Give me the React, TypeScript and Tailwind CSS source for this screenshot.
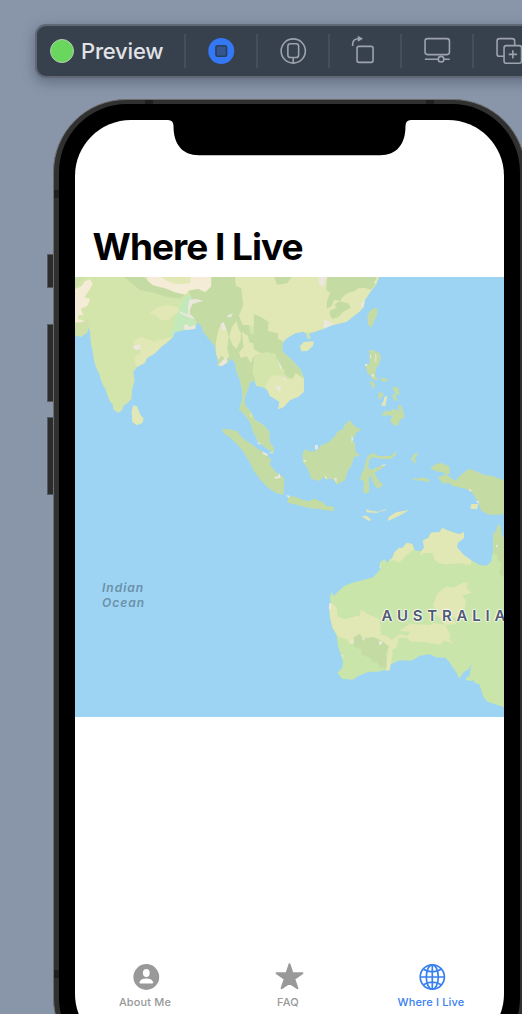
import type { ReactNode } from "react";

const SAND = "#e1e7b5";
const LEAF = "#c4dca4";
const PLAIN = "#d3e5ab";
const DUNE = "#f4ecd6";
const MIST = "#ebe7dd";

function Asia() {
  return (
    <g transform="translate(60 220) scale(.33333)">
      <path
        fill={PLAIN}
        d="M40 160V345L62 350 80 340 86 322 90 335 93 375 98 392 100 410 107 440 118 462 122 478 130 498 137 508 142 525 150 545 158 552 160 568 175 579 187 570 190 558 207 545 215 535 216 510 224 480 220 455 232 440 255 428 260 415 285 400 297 385 320 370 340 350 345 335 375 330 407 325 410 305 425 318 430 335 450 360 465 378 468 400 475 420 472 436 485 438 500 430 515 415 525 430 530 455 540 480 546 510 548 535 538 568 550 580 570 605 580 635 595 665 620 685 642 698 642 685 628 665 628 635 610 615 585 600 575 580 555 555 555 530 565 505 570 485 585 483 588 497 605 500 622 510 630 528 648 535 658 545 655 568 672 560 690 540 715 530 732 515 732 475 722 450 705 430 690 415 668 395 665 375 680 355 705 340 730 335 739 342 743 357 752 355 746 342 760 337 790 328 800 320 820 315 860 305 875 293 885 285 898 275 910 262 915 240 925 225 935 210 948 195 955 160Z"
      />
      <path fill={DUNE} d="M45 208 65 198 74 184 90 178 98 192 90 207 73 232 91 237 82 258 62 266 70 286 56 285 53 296 71 302 69 309 45 307Z" />
      <path fill="#cfe1a8" d="M45 170H78L60 184 45 205ZM45 310 72 305 87 300 82 338 62 350 45 345Z" />
      <path fill={LEAF} d="M190 170 250 170 278 195 310 205 350 216 378 222 360 236 320 231 280 218 240 210 215 190Z" />
      <path fill={DUNE} d="M258 165H455L453 200 436 217 414 207 386 212 376 224 342 216 317 205 280 196 264 184Z" />
      <path fill={SAND} d="M300 170H392L390 190 350 193 324 184Z" />
      <path fill={SAND} d="M268 280 292 262 322 256 357 262 356 276 340 286 326 301 300 300 290 287ZM218 365 244 350 282 365 341 349 310 375 285 400 260 415 255 428 232 440 224 430 226 408 244 397Z" />
      <path fill="#c3e9bb" d="M355 275 365 243 382 227 402 228 404 238 388 246 383 266 389 285 405 297 406 326 375 330 345 336 337 352 328 345 345 311 342 299Z" />
      <path
        fill={LEAF}
        d="M386 212 414 207 436 217 453 200 455 165H500L525 170 528 198 544 205 550 255 537 287 548 315 567 315 570 340 582 345 582 282 602 290 626 306 624 333 654 340 654 356 668 360 668 395 690 415 705 430 722 450 728 473 707 460 698 477 680 469 666 450 653 428 645 401 620 397 582 404 596 410 580 435 583 460 586 483 570 485 565 505 555 530 555 555 575 580 585 600 610 615 628 635 628 665 642 685 642 698 620 685 595 665 580 635 570 605 550 580 538 568 548 535 546 510 540 480 530 455 525 430 515 415 500 430 485 438 472 436 475 420 468 400 465 378 450 360 430 335 425 318 408 303 398 290 388 278 389 260 398 242Z"
      />
      <path fill={SAND} d="M500 165H960L948 195 935 210 925 225 915 240 910 262 898 275 885 285 860 305 820 315 800 320 760 337 730 335 705 340 680 355 668 363 654 356 654 340 624 333 626 306 602 290 582 282 580 320 567 315 548 315 537 287 550 255 544 205 528 198 525 170Z" />
      <path fill={SAND} d="M476 323 491 313 500 329 506 350 502 386 508 410 498 418 484 407 474 420 468 400 468 365ZM516 320 530 304 537 329 543 339 542 362 529 386 517 374 508 350ZM545 335 564 347 568 367 580 370 582 388 605 401 598 410 580 410 573 430 560 409 542 414 537 397 551 382Z" />
      <path fill={PLAIN} d="M582 406 620 397 645 401 655 430 674 452 670 470 651 464 633 468 625 480 620 495 605 500 588 497 586 483 577 455 582 430Z" />
      <path fill={SAND} d="M633 468 657 465 678 476 698 477 707 460 731 478 732 515 715 530 690 540 672 560 655 568 658 545 630 528 616 497 625 480Z" />
      <path fill={LEAF} d="M640 165H700L681 190 651 194ZM802 165H950L948 178 940 187 948 195 931 209 915 203 895 205 882 214 862 219 846 233 840 244 864 250 873 263 849 276 835 292 816 296 808 280 812 271 830 263 824 254 840 242 822 239 813 260 800 266 801 242 811 218 799 210Z" />
      <path fill={MIST} d="M778 165H801L795 187 788 202 777 190ZM792 296 804 303 820 312 803 322 790 326ZM905 246 914 243 912 258 903 266ZM388 239 409 237 430 242 410 248 397 252 390 268 390 283 406 297 390 293 360 280 358 274 385 284 384 260ZM371 317 380 311 389 321 404 315 406 327 374 330ZM481 313 491 306 499 327 487 332ZM503 286 519 280 513 292 503 292ZM498 410 502 427 485 439 475 435ZM218 377 240 373 242 388 225 390ZM640 493 650 500 664 497 657 517ZM650 415 665 440 664 452ZM668 467 680 477 672 482Z" />
      <path fill={SAND} d="M219 556 231 559 240 582 251 596 247 609 232 616 217 607 215 575ZM720 378 732 366 761 364 759 378 742 393 724 394Z" />
      <path fill={LEAF} d="M922 289 930 272 944 264 953 266 951 286 941 307 934 323 924 314Z" />
      <path fill={LEAF} d="M928 391 943 390 949 398 957 395 963 414 957 435 948 444 946 465 951 476 962 479 970 472 984 481 985 484 969 485 961 479 946 480 935 475 930 464 924 462 915 435 929 431ZM928 484 941 485 946 500 938 504ZM955 516 972 521 965 532 955 540ZM996 502 1015 502 1018 523 1007 526 1013 544 1003 541 996 525 1007 522Z" />
      <path fill={SAND} d="M973 530 982 528 976 559 963 556 971 543Z" />
      <path fill={MIST} d="M930 405h3v9h-3zM946 402h3v25h-3zM936 460 943 466 940 471 935 468ZM915 432h7v6h-6z" />
    </g>
  );
}

function Islands() {
  return (
    <g transform="translate(200 400) scale(.33333)">
      <path fill={LEAF} d="M65 88 80 87 112 93 122 108 139 122 163 139 179 150 199 165 213 178 209 193 228 217 253 235 251 285 229 279 204 263 182 240 160 210 151 190 127 151 111 133 91 113 73 101Z" />
      <path fill={LEAF} d="M307 165 314 148 332 155 353 151 364 135 384 128 404 109 414 94 427 89 434 75 449 60 458 73 473 84 486 91 470 96 464 109 452 116 465 129 466 154 480 167 462 171 455 195 442 215 436 240 410 254 403 242 392 234 380 240 370 231 358 243 334 236 326 213 318 197 309 187Z" />
      <path fill={LEAF} d="M264 291 282 289 307 299 330 304 342 295 356 302 372 308 377 317 402 320 401 334 350 326 326 324 293 315 263 308Z" />
      <path fill={LEAF} d="M498 180 507 164 520 159 536 169 573 167 591 153 587 166 571 177 542 176 520 172 508 178 505 203 514 210 548 195 558 193 543 207 523 218 537 243 550 255 532 267 519 247 512 225 507 234 507 278 490 280 492 244 480 240 485 219 493 206ZM640 164 653 156 652 164 644 175 650 191 640 186 633 176ZM638 235 655 236 668 232 685 238 691 247 670 242 642 241ZM691 205 704 194 722 188 748 199 749 221 738 223 755 235 767 242 779 228 804 208 817 209 850 224 880 229 915 242V340L897 344 866 344 844 332 832 302 817 278 800 267 758 258 746 248 728 251 713 231 736 224 730 217 708 214ZM545 42 558 32 570 34 579 26 596 33 594 14 605 19 614 51 600 60 593 77 580 75 570 62 578 48 562 45 551 50Z" />
      <path fill={SAND} d="M498 327 511 332 536 335 557 327 558 330 529 339 500 337ZM484 349 500 347 514 359 507 363ZM565 352 588 337 628 330 602 345 565 363ZM814 312 835 312 831 328 811 326Z" />
      <path fill={MIST} d="M171 125 181 130 177 135ZM186 154 204 163 202 168 190 163ZM209 157h10v3h-10zM149 36 156 49 153 53ZM255 286 270 287 269 293ZM346 135 354 135 353 149 344 147ZM454 109 461 115 455 128ZM309 180h10l-3 8zM373 226 382 233 377 236ZM402 234h8l-1 14zM543 196 558 192 552 197ZM805 267 816 270 811 275ZM827 303h10v8zM222 230h9l8-10 3 14-16 2z" />
    </g>
  );
}

function Australia() {
  return (
    <g transform="translate(310 510) scale(.33333)">
      <path
        fill="#c9e5aa"
        d="M62 275 60 260 65 246 71 258 90 239 102 228 128 218 157 211 190 202 211 178 209 158 223 148 233 159 240 146 255 144 252 128 266 115 278 113 290 98 307 102 315 121 331 124 342 113 339 91 355 83 363 68 389 66 397 53 411 61 448 73 462 66 462 84 443 99 441 112 461 135 484 151 507 164 529 167 543 156 550 121 550 72 558 63 565 42 572 51 575 77 590 90V595L575 589 532 575 520 560 508 522 494 519 492 510 481 513 467 510 470 500 478 500 484 462 476 478 463 485 447 506 440 489 418 456 406 443 378 442 360 433 330 437 304 452 268 451 238 465 228 479 202 485 178 485 144 498 129 509 96 506 82 488 97 473 99 455 84 408 80 376 67 353 60 321Z"
      />
      <path fill={SAND} d="M233 159 247 144 252 128 266 115 278 113 290 98 307 102 312 119 292 133 280 148 267 157 248 149ZM327 136 342 113 339 91 355 83 363 68 389 66 397 53 411 61 448 73 462 66 462 84 443 99 441 112 461 135 484 151 482 166 452 160 405 163 385 159 373 149 369 130 349 128ZM56 290 65 279 80 292 82 319 103 328 150 316 153 298 177 314 209 328 213 375 231 377 245 390 268 372 293 377 301 365 267 363 299 341 356 345 374 339 406 345 421 375 417 386 432 400 403 392 389 404 347 397 300 394 292 384 265 383 261 410 246 420 248 433 239 481 227 483 229 460 236 410 216 402 195 386 150 382 148 398 119 402 112 389 85 380 68 354 60 321ZM369 288 378 262 383 249 410 229 430 233 460 217 475 220 469 233 485 248 458 257 468 274 463 311 440 323 425 320 440 342 404 345 394 323 375 315 380 298Z" />
      <path fill={LEAF} d="M131 382 149 371 158 385 190 381 211 390 237 409 228 428 230 474 208 472 200 456 190 460 180 443 156 435 154 420 132 409ZM550 72 558 63 565 42 572 51 575 77 590 90V210L568 190 575 160 560 145 564 136 550 130Z" />
      <path fill={MIST} d="M57 280h8v18h-8zM121 392h11l-5 11zM155 385h10l-4 8zM206 394h10v8l-8 3zM94 435h6v10zM209 167h5l-4 11zM132 321 141 320 137 325ZM557 105h8l-6 9z" />
    </g>
  );
}

function WorldMap() {
  return (
    <div className="relative h-[440px] w-full shrink-0 overflow-hidden bg-[#9dd4f3]">
      <svg viewBox="75 277 429 440" className="block h-[440px] w-[429px]">
        <Asia />
        <Islands />
        <Australia />
      </svg>
      <p className="absolute left-[27px] top-[303px] text-[12px] font-semibold italic leading-[15px] tracking-[1px] text-[#6b90a9]">
        Indian
        <br />
        Ocean
      </p>
      <p className="absolute left-[306.5px] top-[329px] whitespace-nowrap text-[15px] font-semibold leading-[20px] tracking-[4.8px] text-[#505a70] [text-shadow:0_0_2px_#fff,1px_0_1px_#ffffffb0,-1px_0_1px_#ffffffb0,0_1px_1px_#ffffffb0,0_-1px_1px_#ffffffb0]">
        AUSTRALIA
      </p>
    </div>
  );
}

function ToolButton({ children }: { children: ReactNode }) {
  return (
    <div className="flex h-[50px] w-[72px] shrink-0 items-center">
      <div className="h-[34px] w-[1.5px] bg-[#454e5b]" />
      <svg viewBox="0 0 70 50" className="h-[50px] w-[70.5px]" fill="none" stroke="#9ca3ad" strokeWidth="1.6">
        {children}
      </svg>
    </div>
  );
}

function Toolbar() {
  return (
    <div className="ml-[35px] flex h-[54px] w-[580px] shrink-0 items-center rounded-[11px] border-2 border-[#5f6874] bg-[#37414e] shadow-[0_4px_14px_rgba(35,45,65,0.4)]">
      <div className="ml-[13px] size-[24px] shrink-0 rounded-full border-[1.5px] border-[#b5cdb6] bg-[#69d65d]" />
      <span className="ml-[7px] w-[103px] shrink-0 text-[22px] font-medium leading-[28px] tracking-[-0.2px] text-[#e1e3e6]">Preview</span>
      <ToolButton>
        <circle cx="35" cy="25" r="13" fill="#3478f6" stroke="none" />
        <rect x="29.7" y="19.7" width="10.6" height="10.6" rx="1.5" fill="#36558f" stroke="#28405f" strokeWidth="1.6" />
      </ToolButton>
      <ToolButton>
        <circle cx="35" cy="25" r="12.1" />
        <rect x="29.6" y="17.7" width="10.8" height="13.8" rx="2.6" />
        <path d="M35 31.5V37" />
      </ToolButton>
      <ToolButton>
        <rect x="26.8" y="20.4" width="16" height="16" rx="1.8" />
        <path d="M22.4 20V18C22.4 14.5 24.7 12.7 28.2 12.7" />
        <path d="M27.5 9.7 32.8 12.7 27.5 15.8Z" fill="#9ca3ad" stroke="none" />
      </ToolButton>
      <ToolButton>
        <rect x="22.8" y="12.6" width="24.4" height="16" rx="2.5" />
        <path d="M22.6 33.2H36M41.6 33.2H47.5" />
        <circle cx="38.8" cy="33.2" r="2.8" />
      </ToolButton>
      <ToolButton>
        <path d="M29.8 30.3H25.2Q22.8 30.3 22.8 27.9V15Q22.8 12.6 25.2 12.6H38Q40.4 12.6 40.4 15V19.4" />
        <rect x="29.8" y="19.6" width="17.5" height="17.6" rx="2.3" />
        <path d="M38.6 24.3V32.5M34.5 28.4H42.7" />
      </ToolButton>
    </div>
  );
}

function Tab({ label, active, children }: { label: string; active?: boolean; children: ReactNode }) {
  return (
    <div className={active ? "flex flex-1 flex-col items-center text-[#3880f0]" : "flex flex-1 flex-col items-center text-[#999999]"}>
      <svg viewBox="0 0 30 30" className="size-[30px]">
        {children}
      </svg>
      <span className="mt-[3px] -ml-[3px] whitespace-nowrap text-[11px] font-medium leading-[14px] tracking-[0.15px]">{label}</span>
    </div>
  );
}

function TabBar() {
  return (
    <div className="mt-auto mb-[41px] flex h-[47px] shrink-0">
      <Tab label="About Me">
        <circle cx="14.3" cy="15" r="12.9" fill="currentColor" />
        <ellipse cx="14.3" cy="11.1" rx="3.4" ry="4" fill="white" />
        <path d="M7.5 20.3C8.3 17.4 11 16.4 14.3 16.4S20.4 17.4 21.1 20.3Q21.1 21.5 20 21.5H8.6Q7.5 21.5 7.5 20.3Z" fill="white" />
      </Tab>
      <Tab label="FAQ">
        <path d="M14.5 2.2 17.4 11.1 27.4 11.2 19.3 17 22.4 26.2 14.5 20.8 6.6 26.2 9.7 17 1.6 11.2 11.6 11.1Z" fill="currentColor" stroke="currentColor" strokeWidth="2" strokeLinejoin="round" />
      </Tab>
      <Tab label="Where I Live" active>
        <g fill="none" stroke="currentColor" strokeWidth="1.7">
          <circle cx="14.3" cy="15" r="12.1" />
          <ellipse cx="14.3" cy="15" rx="6" ry="12.1" />
          <path d="M14.3 2.8V27.2M2.1 15H26.5M5.4 7.2Q14.3 12.4 23.2 7.2M5.4 22.8Q14.3 17.6 23.2 22.8" />
        </g>
      </Tab>
    </div>
  );
}

function Phone() {
  return (
    <div className="mt-[21px] flex shrink-0">
      <div className="flex w-[53px] shrink-0 flex-col items-end pt-[155px]">
        <div className="h-[34px] w-[6px] rounded-l-[1px] border border-r-0 border-[#555a62] bg-[#2c2c2c]" />
        <div className="mt-[36px] h-[78px] w-[6px] rounded-l-[1px] border border-r-0 border-[#555a62] bg-[#2c2c2c]" />
        <div className="mt-[15px] h-[78px] w-[6px] rounded-l-[1px] border border-r-0 border-[#555a62] bg-[#2c2c2c]" />
      </div>
      <div className="relative h-[972px] w-[473px] shrink-0 rounded-[73px] border border-[#6c6c6b] bg-[#303030] px-[5px] py-[4px]">
        <div className="absolute left-[91px] top-0 h-[5px] w-[8px] bg-[#1f1f1f]" />
        <div className="absolute left-[372px] top-0 h-[5px] w-[8px] bg-[#1f1f1f]" />
        <div className="absolute left-0 top-[90px] h-[8px] w-[5px] bg-[#1f1f1f]" />
        <div className="absolute left-0 top-[870px] h-[8px] w-[5px] bg-[#1f1f1f]" />
        <div className="relative h-full w-full rounded-[68px] bg-black px-[16px] py-[16px]">
          <div className="flex h-[930px] w-[429px] flex-col overflow-hidden rounded-[56px] bg-white">
            <svg viewBox="0 0 429 36" className="block h-[36px] w-[429px] shrink-0">
              <path d="M93 0Q98.5 .2 98.5 6C98.5 24 107 35.2 124 35.2H305C322 35.2 330.5 24 330.5 6Q330.5 .2 336 0Z" fill="black" />
            </svg>
            <h1 className="mt-[68px] h-[53px] shrink-0 whitespace-nowrap pl-[17.5px] text-[37px] font-bold leading-[46px] tracking-[-1px] text-black">Where I Live</h1>
            <WorldMap />
            <TabBar />
          </div>
        </div>
      </div>
    </div>
  );
}

export default function App() {
  return (
    <main className="flex h-[1014px] w-[522px] flex-col overflow-hidden bg-[#8996aa] pt-[24px] font-['Inter','Liberation_Sans',sans-serif]">
      <Toolbar />
      <Phone />
    </main>
  );
}
